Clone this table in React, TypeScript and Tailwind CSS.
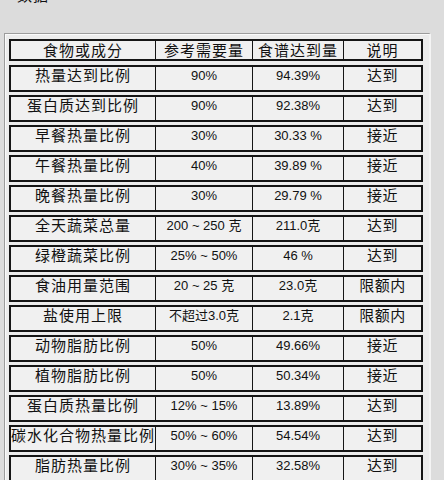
const rows: [string, string, string, string][] = [
  ["热量达到比例", "90%", "94.39%", "达到"],
  ["蛋白质达到比例", "90%", "92.38%", "达到"],
  ["早餐热量比例", "30%", "30.33 %", "接近"],
  ["午餐热量比例", "40%", "39.89 %", "接近"],
  ["晚餐热量比例", "30%", "29.79 %", "接近"],
  ["全天蔬菜总量", "200 ~ 250 克", "211.0克", "达到"],
  ["绿橙蔬菜比例", "25% ~ 50%", "46 %", "达到"],
  ["食油用量范围", "20 ~ 25 克", "23.0克", "限额内"],
  ["盐使用上限", "不超过3.0克", "2.1克", "限额内"],
  ["动物脂肪比例", "50%", "49.66%", "接近"],
  ["植物脂肪比例", "50%", "50.34%", "接近"],
  ["蛋白质热量比例", "12% ~ 15%", "13.89%", "达到"],
  ["碳水化合物热量比例", "50% ~ 60%", "54.54%", "达到"],
  ["脂肪热量比例", "30% ~ 35%", "32.58%", "达到"],
];

const cjk = "font-['Noto_Sans_CJK_SC',sans-serif]";
const num = "font-['Liberation_Sans','Noto_Sans_CJK_SC',sans-serif]";

export default function App() {
  return (
    <div className="w-[444px] h-[480px] overflow-hidden bg-[#dcdcdc] text-[#111]">
      {/* clipped caption */}
      <div className="h-[33px] overflow-hidden pl-[17px]">
        <p className={`${cjk} -mt-[13px] text-[15px] leading-[16px] tracking-[1px]`}>数据</p>
      </div>

      <div className="ml-[4px] w-[427px] h-[460px] border-t border-l border-[#9c9c9c] border-r-2 border-r-[#f4f4f4] bg-[#ececec] shadow-[inset_1px_1px_0_#fafafa] pt-[5px] pl-[4px]">
        {/* header */}
        <div className="w-[414px] h-[22px] border-2 border-[#151515] bg-[#f0f0f0] grid grid-cols-[145px_97px_91px_77px]">
          <div className={`${cjk} border-r border-[#151515] text-center text-[15px] leading-[18px] tracking-[1px] whitespace-nowrap`}>食物或成分</div>
          <div className={`${cjk} border-r border-[#151515] text-center text-[15px] leading-[18px] tracking-[1px] whitespace-nowrap`}>参考需要量</div>
          <div className={`${cjk} border-r border-[#151515] text-center text-[15px] leading-[18px] tracking-[1px] whitespace-nowrap`}>食谱达到量</div>
          <div className={`${cjk} text-center text-[15px] leading-[18px] tracking-[1px]`}>说明</div>
        </div>

        <div className="mt-[4px] flex flex-col gap-[3px]">
          {rows.map(([name, ref, got, note]) => (
            <div
              key={name}
              className="w-[414px] h-[27px] shrink-0 border-2 border-[#151515] bg-[#f0f0f0] grid grid-cols-[145px_97px_91px_77px]"
            >
              <div className={`${cjk} border-r border-[#151515] text-center text-[15px] leading-[16px] tracking-[1px] whitespace-nowrap`}>{name}</div>
              <div className={`${num} border-r border-[#151515] text-center text-[13px] leading-[18px] whitespace-nowrap`}>{ref}</div>
              <div className={`${num} border-r border-[#151515] text-center text-[13px] leading-[18px] whitespace-nowrap`}>{got}</div>
              <div className={`${cjk} text-center text-[15px] leading-[16px] tracking-[0.5px] whitespace-nowrap`}>{note}</div>
            </div>
          ))}
        </div>
      </div>
    </div>
  );
}
